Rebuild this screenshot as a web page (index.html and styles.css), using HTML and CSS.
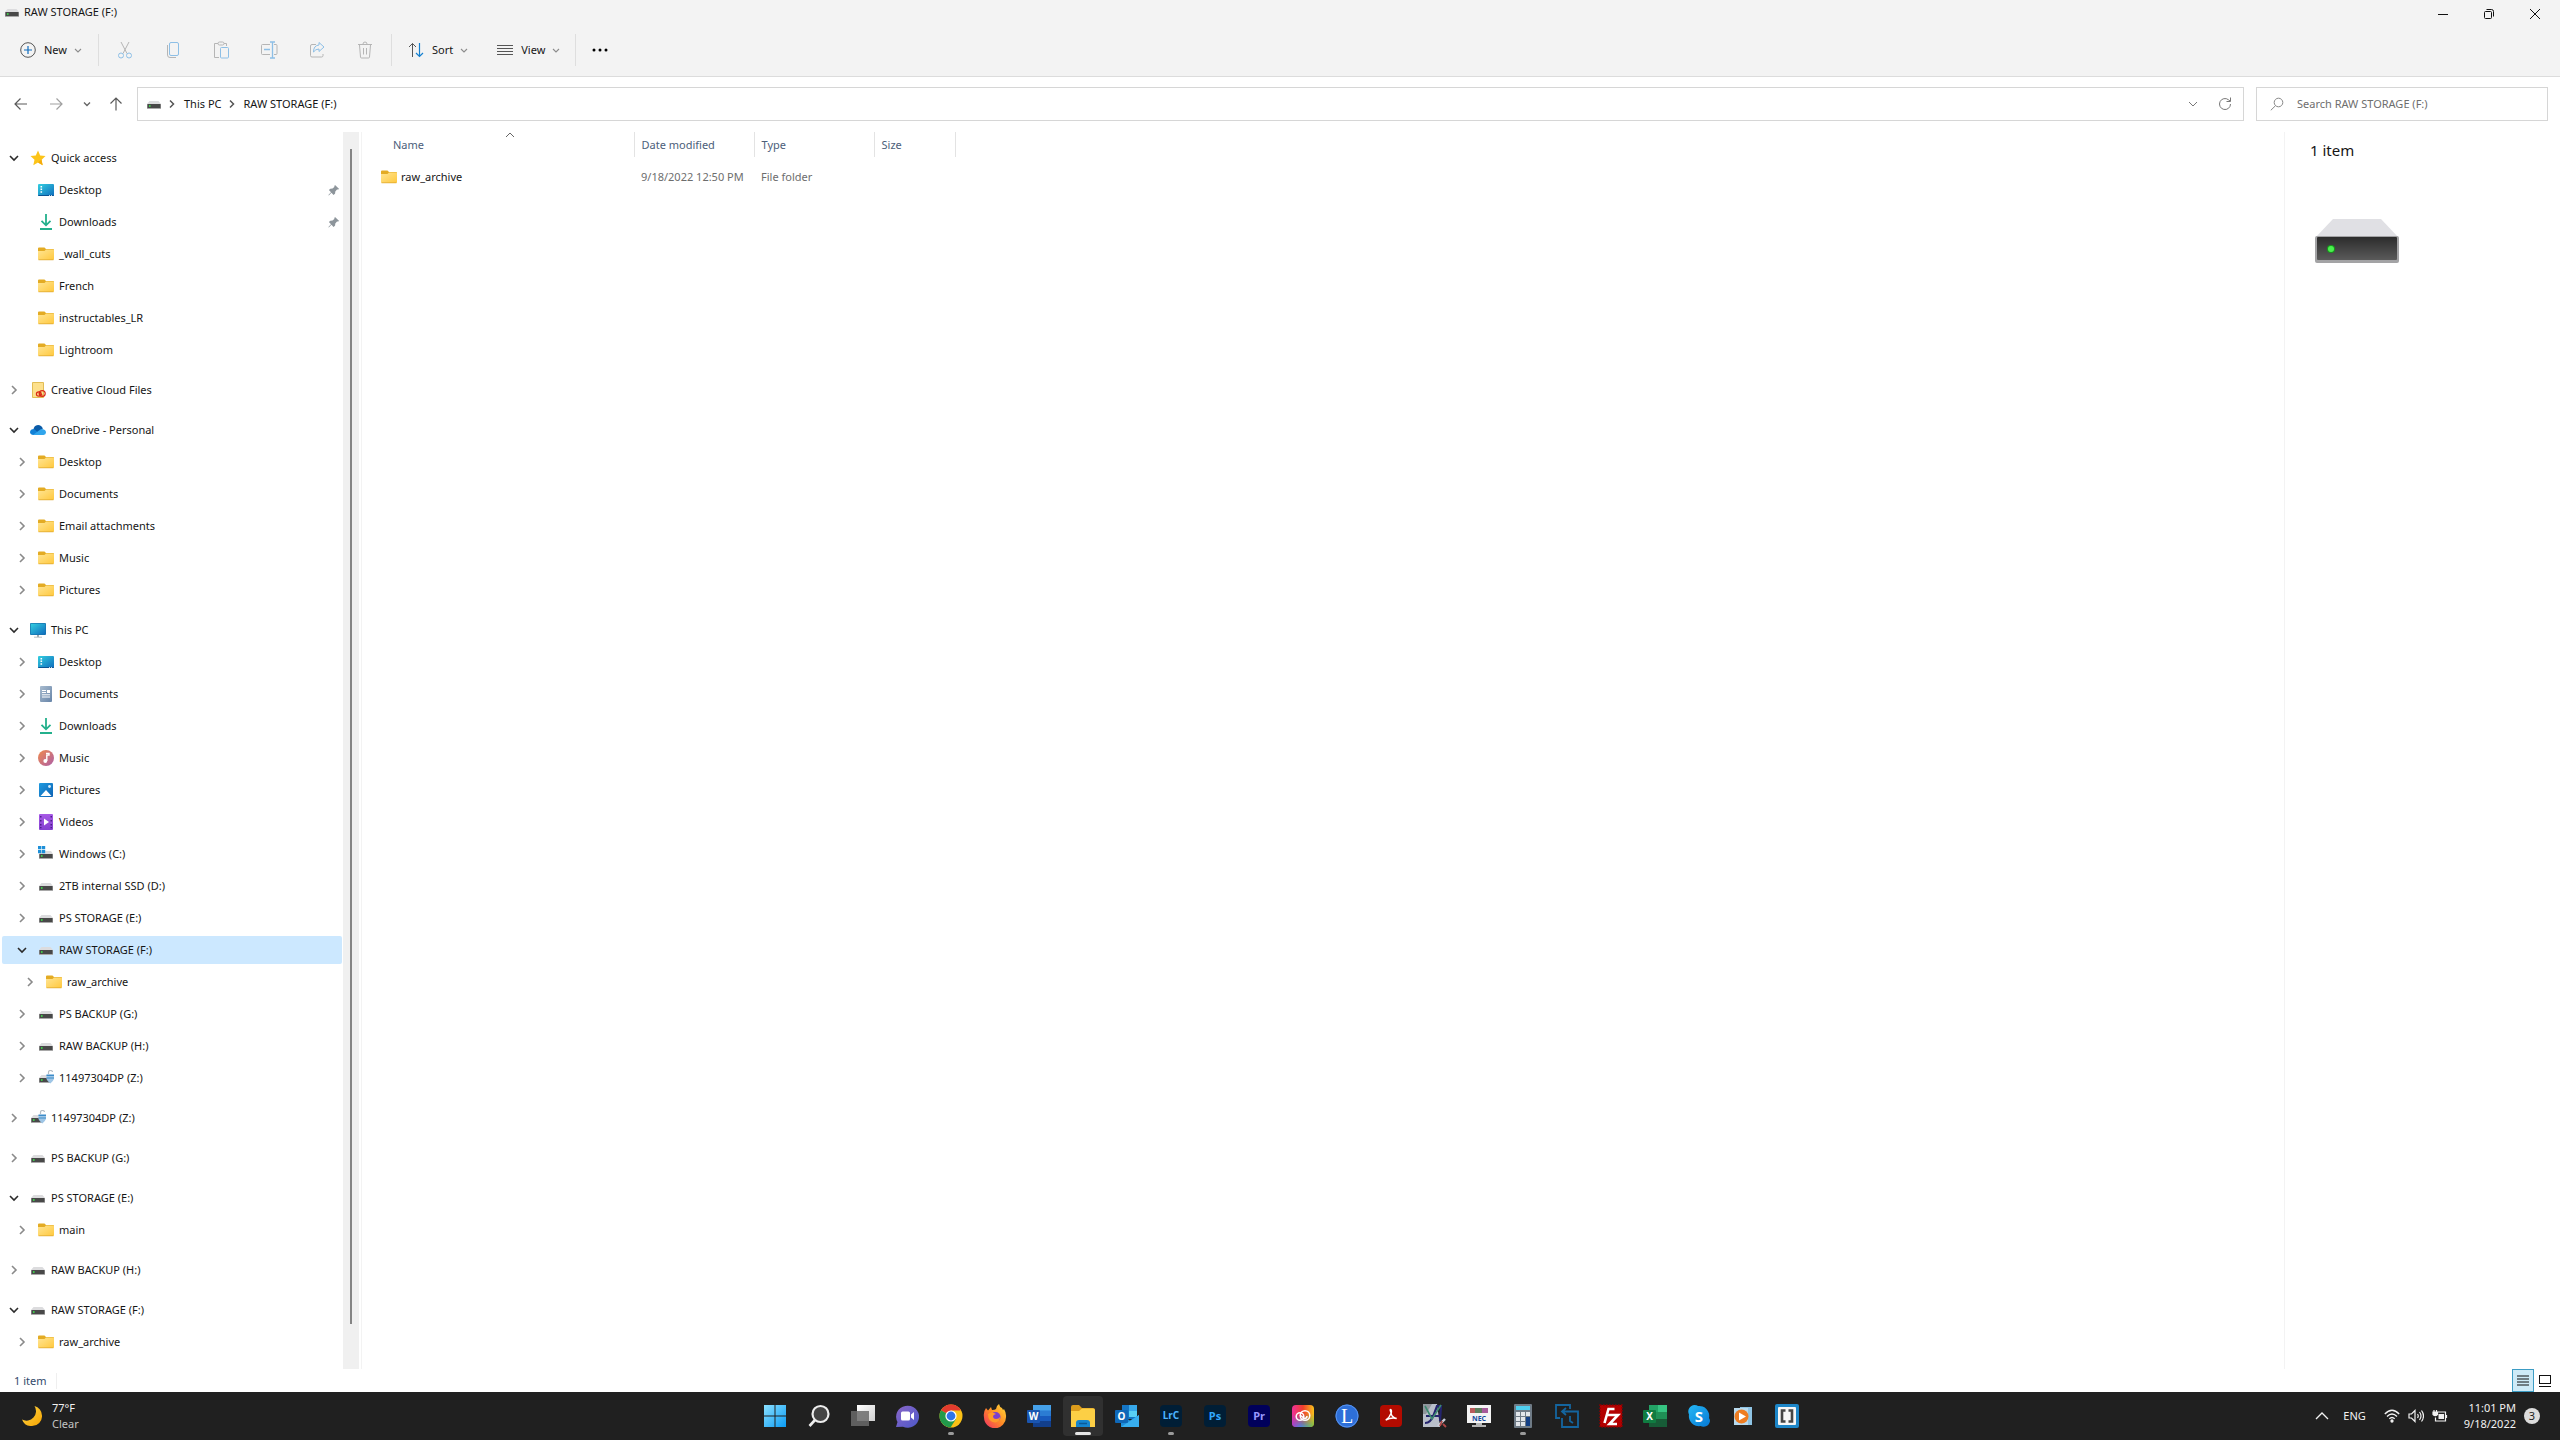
FILE: index.html
```html
<!DOCTYPE html>
<html lang="en">
<head>
<meta charset="utf-8">
<title>RAW STORAGE (F:)</title>
<link rel="stylesheet" href="styles.css">
</head>
<body>
<svg class="sprite" aria-hidden="true">
  <defs>
    <linearGradient id="gFolder" x1="0" y1="0" x2="1" y2="1"><stop offset="0" stop-color="#ffe594"/><stop offset="1" stop-color="#ffc83d"/></linearGradient>
    <linearGradient id="gScreen" x1="0" y1="0" x2="1" y2="1"><stop offset="0" stop-color="#33cfe0"/><stop offset="1" stop-color="#0f6cbd"/></linearGradient>
    <linearGradient id="gDoc" x1="0" y1="0" x2="1" y2="1"><stop offset="0" stop-color="#a9bccf"/><stop offset="1" stop-color="#6684a8"/></linearGradient>
    <linearGradient id="gMusic" x1="0" y1="0" x2="1" y2="1"><stop offset="0" stop-color="#f08a4b"/><stop offset="1" stop-color="#ad5fa8"/></linearGradient>
    <linearGradient id="gPic" x1="0" y1="0" x2="1" y2="1"><stop offset="0" stop-color="#1f9be0"/><stop offset="1" stop-color="#0d62b4"/></linearGradient>
    <linearGradient id="gVid" x1="0" y1="0" x2="0" y2="1"><stop offset="0" stop-color="#a75ae6"/><stop offset="1" stop-color="#8440d0"/></linearGradient>
    <linearGradient id="gDrive" x1="0" y1="0" x2="0" y2="1"><stop offset="0" stop-color="#2c2c2c"/><stop offset="1" stop-color="#5a5a5a"/></linearGradient>
    <linearGradient id="gWin" x1="0" y1="0" x2="1" y2="1"><stop offset="0" stop-color="#8be0ff"/><stop offset="1" stop-color="#0a9cf5"/></linearGradient>
    <linearGradient id="gChat" x1="0" y1="0" x2="1" y2="1"><stop offset="0" stop-color="#8a66c8"/><stop offset="1" stop-color="#4c58c8"/></linearGradient>
    <linearGradient id="gFox" x1="1" y1="0" x2="0" y2="1"><stop offset="0" stop-color="#ffe03a"/><stop offset=".5" stop-color="#ff8a25"/><stop offset="1" stop-color="#f02a6a"/></linearGradient>
    <linearGradient id="gCC" x1="0" y1="0" x2="1" y2="0"><stop offset="0" stop-color="#f0309a"/><stop offset=".5" stop-color="#f0402c"/><stop offset="1" stop-color="#f9c21c"/></linearGradient>
    <linearGradient id="gCCLow" x1="0" y1="0" x2="1" y2="0"><stop offset="0" stop-color="#a040d8"/><stop offset=".4" stop-color="#3f8be8"/><stop offset="1" stop-color="#6cc644"/></linearGradient>
    <linearGradient id="gFade" x1="0" y1="0" x2="0" y2="1"><stop offset=".4" stop-color="#000"/><stop offset="1" stop-color="#fff"/></linearGradient>
    <mask id="mFade"><rect width="24" height="24" fill="url(#gFade)"/></mask>
    <linearGradient id="gSky" x1="0" y1="0" x2="1" y2="1"><stop offset="0" stop-color="#25b8f5"/><stop offset="1" stop-color="#0678d4"/></linearGradient>
    <linearGradient id="gMoon" x1="0" y1="0" x2="1" y2="1"><stop offset="0" stop-color="#ffd84a"/><stop offset="1" stop-color="#f5a300"/></linearGradient>
    <linearGradient id="gTask" x1="0" y1="0" x2="1" y2="1"><stop offset="0" stop-color="#fff"/><stop offset="1" stop-color="#cfcfcf"/></linearGradient>
  </defs>
  <symbol id="right" viewBox="0 0 10 10"><path d="M3 1l4 4-4 4" fill="none" stroke="#8a8a8a" stroke-width="1.6"/></symbol>
  <symbol id="down" viewBox="0 0 10 10"><path d="M1 3l4 4 4-4" fill="none" stroke="#2b2b2b" stroke-width="1.6"/></symbol>
  <symbol id="caret" viewBox="0 0 10 10"><path d="M2 4l3 3 3-3" fill="none" stroke="#8c8c8c" stroke-width="1.1"/></symbol>
  <symbol id="folder" viewBox="0 0 16 16"><path d="M0 2.500q0-1 1-1h5.500l1.500 1.500h7q1 0 1 1v3H0z" fill="#e3ab24"/><path d="M0 5h6.500l1.500-1.500h7q1 0 1 1V13q0 1-1 1H1q-1 0-1-1z" fill="url(#gFolder)"/><path d="M.5 13.800h15" stroke="#dba32a" stroke-width=".7"/></symbol>
  <symbol id="star" viewBox="0 0 16 16"><path d="M8 .6l2.200 4.900 5.300.6-4 3.600 1.200 5.500L8 12.600l-4.700 2.600 1.200-5.500-4-3.600 5.300-.6z" fill="#fcc419"/><path d="M8 12.600l4.700 2.600-1.200-5.500L15.500 6" fill="#f5ab0c"/></symbol>
  <symbol id="desktop" viewBox="0 0 16 16"><rect y="2" width="16" height="12" rx="1" fill="url(#gScreen)"/><path d="M0 13h16v0q0 1-1 1H1q-1 0-1-1z" fill="#0b5494"/><path d="M2.500 4h1.600v1.500H2.500zM2.500 6.600h1.600v1.500H2.500zM2.500 9.200h1.600v1.500H2.500zM11 13h1v.8h-1zM13 13h1v.8h-1z" fill="#fff"/></symbol>
  <symbol id="downloads" viewBox="0 0 16 16"><path d="M8 0v11M3.500 6.800L8 11.300l4.500-4.500M2 15h12" fill="none" stroke="#23b08c" stroke-width="1.8"/></symbol>
  <symbol id="document" viewBox="0 0 16 16"><rect x="2" width="12" height="16" rx="1" fill="url(#gDoc)"/><path d="M4 4.500h4M4 6.500h4M4 8.800h8M4 11h8" stroke="#fff" stroke-width="1"/><rect x="9" y="4" width="3" height="3" fill="#fff"/></symbol>
  <symbol id="music" viewBox="0 0 16 16"><circle cx="8" cy="8" r="8" fill="url(#gMusic)"/><path d="M8 3.500h3v1.600H8.800V11" fill="none" stroke="#fff" stroke-width="1.400"/><circle cx="7.300" cy="11" r="1.900" fill="#fff"/></symbol>
  <symbol id="picture" viewBox="0 0 16 16"><rect x="1" y="1" width="14" height="14" rx="1" fill="url(#gPic)"/><path d="M2.500 14L8 8l5.500 6z" fill="#fff"/><circle cx="11.500" cy="4.500" r="1.400" fill="#d6ecfa"/></symbol>
  <symbol id="video" viewBox="0 0 16 16"><rect x="1" width="14" height="16" rx="1" fill="url(#gVid)"/><path d="M2 2h1.500v1.600H2zM2 6h1.500v1.600H2zM2 10h1.500v1.600H2zM2 13h1.500v1.300H2zM12.500 2H14v1.600h-1.500zM12.500 6H14v1.600h-1.500zM12.500 10H14v1.600h-1.500zM12.500 13H14v1.300h-1.500z" fill="#4d1d8a"/><path d="M6 4.500l5 3.500-5 3.500z" fill="#fff"/></symbol>
  <symbol id="drive" viewBox="0 0 16 16"><path d="M3.500 5h9L15 8H1z" fill="#dcdcde"/><rect x="1" y="8" width="14" height="5" rx=".6" fill="#a8a8a8"/><rect x="1.500" y="8" width="13" height="4" fill="#484848"/><circle cx="3.800" cy="10" r=".9" fill="#3fdc4b"/></symbol>
  <symbol id="windrive" viewBox="0 0 16 16"><path d="M4 5h9l2 3H1z" fill="#dcdcde"/><rect x="1" y="8" width="14" height="5" rx=".6" fill="#a8a8a8"/><rect x="1.500" y="8" width="13" height="4" fill="#484848"/><path d="M0 0h3.300v3.300H0zM3.900 0h3.300v3.300H3.900zM0 3.900h3.300v3.300H0zM3.900 3.900h3.300v3.300H3.900z" fill="#1d8fd8"/><circle cx="3.800" cy="10" r=".9" fill="#3fdc4b"/></symbol>
  <symbol id="lockdrive" viewBox="0 0 16 16"><path d="M3.500 5h8l2 3H1z" fill="#dcdcde"/><rect x="1" y="8" width="12" height="5" rx=".6" fill="#a8a8a8"/><rect x="1.500" y="8" width="11" height="4" fill="#484848"/><circle cx="3.800" cy="10" r=".9" fill="#3fdc4b"/><path d="M10.500 4V2.500q0-2 2-2t2 1.500" fill="none" stroke="#b4bcc4" stroke-width="1.200"/><path d="M8.500 4H16v5q-1 2.500-3.700 4.500Q9.500 11.500 8.500 9z" fill="#9fc6e6"/><path d="M8.500 5.500H16M8.500 8H16" stroke="#3d8cc8" stroke-width="1"/></symbol>
  <symbol id="cloudfiles" viewBox="0 0 16 16"><path d="M2.500.5h11v15h-11z" fill="#fde08c" stroke="#e2bd55"/><ellipse cx="8.800" cy="12" rx="2.400" ry="2.200" fill="none" stroke="#da2a16" stroke-width="1.200"/><ellipse cx="12.200" cy="11.600" rx="3" ry="2.900" fill="none" stroke="#da2a16" stroke-width="1.200"/><path d="M9 11l3.500 2.500" stroke="#da2a16" stroke-width="1.100"/></symbol>
  <symbol id="onedrive" viewBox="0 0 16 16"><path d="M3.500 8Q3.500 3.500 8 3q3.500 0 4.800 3.500L9 12z" fill="#0a5ba8"/><path d="M3.500 13Q0 12.500 0 10q.3-3 4-3l7 6z" fill="#1180d6"/><path d="M3 13l8-6q5 0 5 3.500 0 2.200-2.500 2.500z" fill="#30a5ec"/></symbol>
  <symbol id="pc" viewBox="0 0 16 16"><rect y="1" width="16" height="12" rx="1" fill="#1773ae"/><rect x=".7" y="1.700" width="14.600" height="10.600" fill="url(#gScreen)"/><path d="M7 13h2v2H7z" fill="#9aa4ac"/><path d="M4 15.200h8" stroke="#b6bec4" stroke-width="1"/></symbol>
  <symbol id="pin" viewBox="0 0 12 12"><path d="M7 1l4.200 4-1.200.4-1 .2-1.700 2-.2 2L5.600 11 3.400 8.800.8 11.400l-.4-.5L3 8.300.9 6l1.400-1.300 2.200-.2 1.800-1.600.1-1z" fill="#8d959b"/></symbol>
</svg>

<header class="chrome">
  <div class="titlebar">
    <svg class="i16"><use href="#drive"/></svg>
    <h1>RAW STORAGE (F:)</h1>
    <div class="winctl">
      <button aria-label="Minimize"><svg width="12" height="12"><path d="M1 6.500h10" stroke="#111"/></svg></button>
      <button aria-label="Restore"><svg width="12" height="12" fill="none" stroke="#111"><rect x="1.500" y="3.500" width="7" height="7" rx="1"/><path d="M3.500 1.500h5q2 0 2 2v5"/></svg></button>
      <button aria-label="Close"><svg width="12" height="12"><path d="M1 1l10 10M11 1L1 11" stroke="#111"/></svg></button>
    </div>
  </div>
  <div class="toolbar">
    <button class="cmd new"><svg width="16" height="16" fill="none"><circle cx="8" cy="8" r="7.300" stroke="#555"/><path d="M8 4v8M4 8h8" stroke="#0f6cbd" stroke-width="1.200"/></svg><span>New</span><svg class="i10"><use href="#caret"/></svg></button>
    <div class="group">
      <button class="ico" aria-label="Cut"><svg width="16" height="18" fill="none"><path d="M4 1l6 11.500M12 1L6 12.500" stroke="#b5b5b5"/><circle cx="4" cy="14.500" r="2.500" stroke="#8dbfe6"/><circle cx="12" cy="14.500" r="2.500" stroke="#8dbfe6"/></svg></button>
      <button class="ico" aria-label="Copy"><svg width="16" height="18" fill="none"><rect x="4.500" y="1.500" width="9" height="13" rx="1.500" stroke="#8dbfe6"/><path d="M2.500 4v10q0 2.500 2.500 2.500h6" stroke="#b5b5b5"/></svg></button>
      <button class="ico" aria-label="Paste"><svg width="16" height="18" fill="none"><path d="M5 2.500H1.500v14H6M11 2.500h2.500V5" stroke="#b5b5b5"/><rect x="5" y="1" width="6" height="3" rx="1.500" stroke="#b5b5b5"/><rect x="7.500" y="6.500" width="8" height="10.500" rx="1" stroke="#8dbfe6"/></svg></button>
      <button class="ico" aria-label="Rename"><svg width="18" height="18" fill="none"><path d="M10 3.500H2.500q-1 0-1 1v8q0 1 1 1H10M14 3.500h2q1 0 1 1v8q0 1-1 1h-2" stroke="#b5b5b5"/><path d="M12.500 1v16M10 1h5M10 17h5M4 8.500h6" stroke="#8dbfe6" stroke-width="1.300"/></svg></button>
      <button class="ico" aria-label="Share"><svg width="16" height="18" fill="none"><path d="M7 3.500H3q-1.500 0-1.500 1.500v9.500Q1.500 16 3 16h9.500q1.500 0 1.500-1.500V13" stroke="#b5b5b5"/><path d="M10 1.500l5 4.500-5 4.500V8q-3.500 0-5.500 3 0-6.500 5.500-7z" stroke="#8dbfe6"/></svg></button>
      <button class="ico" aria-label="Delete"><svg width="16" height="18" fill="none" stroke="#b5b5b5"><path d="M1 3.500h14M6 3Q6 1 8 1t2 2M2.500 4l1 12q.1 1 1 1h7q.9 0 1-1l1-12M6.500 7v6.500M9.500 7v6.500"/></svg></button>
    </div>
    <div class="group views">
      <button class="cmd"><svg width="16" height="16" fill="none"><path d="M4.500 15V1.500M1 5l3.500-3.500L8 5" stroke="#555"/><path d="M11.500 1v13.500M8 11l3.500 3.500L15 11" stroke="#1580d0" stroke-width="1.200"/></svg><span>Sort</span><svg class="i10"><use href="#caret"/></svg></button>
      <button class="cmd"><svg width="16" height="16"><path d="M0 3.500h16M0 6.500h16M0 9.500h16M0 12.500h16" stroke="#555"/></svg><span>View</span><svg class="i10"><use href="#caret"/></svg></button>
    </div>
    <button class="ico more" aria-label="See more"><svg width="18" height="4"><circle cx="3" cy="2" r="1.500"/><circle cx="9" cy="2" r="1.500"/><circle cx="15" cy="2" r="1.500"/></svg></button>
  </div>
</header>

<nav class="navbar" aria-label="Address">
  <button aria-label="Back"><svg width="14" height="14" fill="none" stroke="#5a5a5a" stroke-width="1.200"><path d="M13 7H1.500M6.500 1.500L1 7l5.500 5.500"/></svg></button>
  <button aria-label="Forward"><svg width="14" height="14" fill="none" stroke="#a0a0a0" stroke-width="1.200"><path d="M1 7h11.500M7.500 1.500L13 7l-5.500 5.500"/></svg></button>
  <button class="recent" aria-label="Recent locations"><svg width="10" height="10" fill="none" stroke="#666" stroke-width="1.400"><path d="M2 3.500l3 3 3-3"/></svg></button>
  <button class="up" aria-label="Up"><svg width="14" height="14" fill="none" stroke="#5a5a5a" stroke-width="1.200"><path d="M7 13.500V1.500M1.500 6.500L7 1l5.500 5.500"/></svg></button>
  <div class="address">
    <svg class="i16"><use href="#drive"/></svg>
    <svg class="i10 sep"><path d="M3 1.500l3.500 3.500L3 8.500" fill="none" stroke="#555" stroke-width="1.500"/></svg>
    <a href="#pc">This PC</a>
    <svg class="i10 sep"><path d="M3 1.500l3.500 3.500L3 8.500" fill="none" stroke="#555" stroke-width="1.500"/></svg>
    <a href="#raw">RAW STORAGE (F:)</a>
    <button class="drop" aria-label="Previous locations"><svg width="10" height="10" fill="none" stroke="#777"><path d="M1 3l4 4 4-4"/></svg></button>
    <button aria-label="Refresh"><svg width="14" height="14" fill="none" stroke="#777"><path d="M12.500 7A5.500 5.500 0 1 1 10.500 2.800L12 4M12.500 0.500V4.500H8.500"/></svg></button>
  </div>
  <label class="search">
    <svg width="14" height="14" fill="none" stroke="#888"><circle cx="8.500" cy="5.500" r="4.300"/><path d="M5.500 8.700L.8 13.300"/></svg>
    <input type="text" placeholder="Search RAW STORAGE (F:)" aria-label="Search RAW STORAGE (F:)">
  </label>
</nav>

<div class="content">
  <aside class="sidebar">
    <nav class="tree" aria-label="Folders">
      <ul>
        <li><a href="#"><svg class="i10"><use href="#down"/></svg><svg class="i16"><use href="#star"/></svg>Quick access</a></li>
        <li class="l1"><a href="#"><i></i><svg class="i16"><use href="#desktop"/></svg>Desktop<svg class="pin"><use href="#pin"/></svg></a></li>
        <li class="l1"><a href="#"><i></i><svg class="i16"><use href="#downloads"/></svg>Downloads<svg class="pin"><use href="#pin"/></svg></a></li>
        <li class="l1"><a href="#"><i></i><svg class="i16"><use href="#folder"/></svg>_wall_cuts</a></li>
        <li class="l1"><a href="#"><i></i><svg class="i16"><use href="#folder"/></svg>French</a></li>
        <li class="l1"><a href="#"><i></i><svg class="i16"><use href="#folder"/></svg>instructables_LR</a></li>
        <li class="l1"><a href="#"><i></i><svg class="i16"><use href="#folder"/></svg>Lightroom</a></li>
      </ul>
      <ul>
        <li><a href="#"><svg class="i10"><use href="#right"/></svg><svg class="i16"><use href="#cloudfiles"/></svg>Creative Cloud Files</a></li>
      </ul>
      <ul>
        <li><a href="#"><svg class="i10"><use href="#down"/></svg><svg class="i16"><use href="#onedrive"/></svg>OneDrive - Personal</a></li>
        <li class="l1"><a href="#"><svg class="i10"><use href="#right"/></svg><svg class="i16"><use href="#folder"/></svg>Desktop</a></li>
        <li class="l1"><a href="#"><svg class="i10"><use href="#right"/></svg><svg class="i16"><use href="#folder"/></svg>Documents</a></li>
        <li class="l1"><a href="#"><svg class="i10"><use href="#right"/></svg><svg class="i16"><use href="#folder"/></svg>Email attachments</a></li>
        <li class="l1"><a href="#"><svg class="i10"><use href="#right"/></svg><svg class="i16"><use href="#folder"/></svg>Music</a></li>
        <li class="l1"><a href="#"><svg class="i10"><use href="#right"/></svg><svg class="i16"><use href="#folder"/></svg>Pictures</a></li>
      </ul>
      <ul>
        <li><a href="#"><svg class="i10"><use href="#down"/></svg><svg class="i16"><use href="#pc"/></svg>This PC</a></li>
        <li class="l1"><a href="#"><svg class="i10"><use href="#right"/></svg><svg class="i16"><use href="#desktop"/></svg>Desktop</a></li>
        <li class="l1"><a href="#"><svg class="i10"><use href="#right"/></svg><svg class="i16"><use href="#document"/></svg>Documents</a></li>
        <li class="l1"><a href="#"><svg class="i10"><use href="#right"/></svg><svg class="i16"><use href="#downloads"/></svg>Downloads</a></li>
        <li class="l1"><a href="#"><svg class="i10"><use href="#right"/></svg><svg class="i16"><use href="#music"/></svg>Music</a></li>
        <li class="l1"><a href="#"><svg class="i10"><use href="#right"/></svg><svg class="i16"><use href="#picture"/></svg>Pictures</a></li>
        <li class="l1"><a href="#"><svg class="i10"><use href="#right"/></svg><svg class="i16"><use href="#video"/></svg>Videos</a></li>
        <li class="l1"><a href="#"><svg class="i10"><use href="#right"/></svg><svg class="i16"><use href="#windrive"/></svg>Windows (C:)</a></li>
        <li class="l1"><a href="#"><svg class="i10"><use href="#right"/></svg><svg class="i16"><use href="#drive"/></svg>2TB internal SSD (D:)</a></li>
        <li class="l1"><a href="#"><svg class="i10"><use href="#right"/></svg><svg class="i16"><use href="#drive"/></svg>PS STORAGE (E:)</a></li>
        <li class="l1"><a href="#" class="selected" aria-current="page"><svg class="i10"><use href="#down"/></svg><svg class="i16"><use href="#drive"/></svg>RAW STORAGE (F:)</a></li>
        <li class="l2"><a href="#"><svg class="i10"><use href="#right"/></svg><svg class="i16"><use href="#folder"/></svg>raw_archive</a></li>
        <li class="l1"><a href="#"><svg class="i10"><use href="#right"/></svg><svg class="i16"><use href="#drive"/></svg>PS BACKUP (G:)</a></li>
        <li class="l1"><a href="#"><svg class="i10"><use href="#right"/></svg><svg class="i16"><use href="#drive"/></svg>RAW BACKUP (H:)</a></li>
        <li class="l1"><a href="#"><svg class="i10"><use href="#right"/></svg><svg class="i16"><use href="#lockdrive"/></svg>11497304DP (Z:)</a></li>
      </ul>
      <ul>
        <li><a href="#"><svg class="i10"><use href="#right"/></svg><svg class="i16"><use href="#lockdrive"/></svg>11497304DP (Z:)</a></li>
      </ul>
      <ul>
        <li><a href="#"><svg class="i10"><use href="#right"/></svg><svg class="i16"><use href="#drive"/></svg>PS BACKUP (G:)</a></li>
      </ul>
      <ul>
        <li><a href="#"><svg class="i10"><use href="#down"/></svg><svg class="i16"><use href="#drive"/></svg>PS STORAGE (E:)</a></li>
        <li class="l1"><a href="#"><svg class="i10"><use href="#right"/></svg><svg class="i16"><use href="#folder"/></svg>main</a></li>
      </ul>
      <ul>
        <li><a href="#"><svg class="i10"><use href="#right"/></svg><svg class="i16"><use href="#drive"/></svg>RAW BACKUP (H:)</a></li>
      </ul>
      <ul>
        <li><a href="#"><svg class="i10"><use href="#down"/></svg><svg class="i16"><use href="#drive"/></svg>RAW STORAGE (F:)</a></li>
        <li class="l1"><a href="#"><svg class="i10"><use href="#right"/></svg><svg class="i16"><use href="#folder"/></svg>raw_archive</a></li>
      </ul>
    </nav>
    <div class="scrollbar"><div class="thumb"></div></div>
  </aside>

  <main class="files">
    <table>
      <thead>
        <tr>
          <th class="c-name"><button>Name<svg class="sorted" width="10" height="6"><path d="M1 5l4-4 4 4" fill="none" stroke="#666"/></svg></button></th>
          <th class="c-date"><button>Date modified</button></th>
          <th class="c-type"><button>Type</button></th>
          <th class="c-size"><button>Size</button></th>
        </tr>
      </thead>
      <tbody>
        <tr>
          <td class="name"><a href="#"><svg class="i16"><use href="#folder"/></svg>raw_archive</a></td>
          <td>9/18/2022 12:50 PM</td>
          <td>File folder</td>
          <td></td>
        </tr>
      </tbody>
    </table>
  </main>

  <aside class="details">
    <h2>1 item</h2>
    <svg width="84" height="44"><path d="M18 0h48l17 18H1z" fill="#e0e0e4"/><rect y="17" width="84" height="27" rx="2" fill="#a3a3a5"/><rect x="2" y="18" width="80" height="23" rx="1" fill="url(#gDrive)"/><circle cx="16" cy="30" r="4" fill="#169a1c"/><circle cx="16" cy="30" r="3" fill="#4bf04f"/></svg>
  </aside>
</div>

<footer class="status">
  <span>1 item</span>
  <div class="layout">
    <button class="on" aria-label="Details view"><svg width="12" height="11"><path d="M0 1h12M0 4h12M0 7h12M0 10h12" stroke="#111"/></svg></button>
    <button aria-label="Large icons view"><svg width="12" height="12" fill="none" stroke="#111"><rect x=".5" y=".5" width="11" height="8"/><path d="M0 11.500h12"/></svg></button>
  </div>
</footer>

<div class="taskbar">
  <button class="weather">
    <svg width="20" height="20"><path d="M12.500 0A10 10 0 0 1 20 9.500 10 10 0 0 1 10 20 10 10 0 0 1 0 13.500 9.500 9.500 0 0 0 12.500 0z" fill="url(#gMoon)"/></svg>
    <span>77°F<br><small>Clear</small></span>
  </button>
  <div class="apps">
    <button aria-label="Start"><svg viewBox="0 0 24 24"><path d="M1 1h10.500v10.500H1zM12.500 1H23v10.500H12.500zM1 12.500h10.500V23H1zM12.500 12.500H23V23H12.500z" fill="url(#gWin)"/></svg></button>
    <button aria-label="Search"><svg viewBox="0 0 24 24"><circle cx="13.500" cy="10" r="8" fill="#444" stroke="#ededed" stroke-width="2.200"/><path d="M8 16l-5.500 6" stroke="#ededed" stroke-width="2.600"/></svg></button>
    <button aria-label="Task view"><svg viewBox="0 0 24 24"><rect x="6" y="1" width="18" height="16" fill="url(#gTask)"/><rect x="0" y="7" width="18" height="15" fill="#6b6b6b" opacity=".85"/></svg></button>
    <button aria-label="Chat"><svg viewBox="0 0 24 24"><path d="M1 23l1.500-5A11.500 11 0 1 1 8 22.800z" fill="url(#gChat)"/><rect x="6" y="7.500" width="9" height="9" rx="1.500" fill="#fff"/><path d="M16 10.500l3-2.500v8l-3-2.500z" fill="#fff"/></svg></button>
    <button aria-label="Chrome" class="run"><svg viewBox="0 0 24 24"><circle cx="12" cy="12" r="11.500" fill="#fbc116"/><path d="M12 12L2 6.300A11.500 11.500 0 0 1 22 6.300z" fill="#e33b2e"/><path d="M12 12L2 6.200A11.500 11.500 0 0 0 11.500 23.500L17 15z" fill="#229a4b"/><path d="M22 6.500H12v5l5 3.500z" fill="#fbc116"/><circle cx="12" cy="12" r="5.600" fill="#fff"/><circle cx="12" cy="12" r="4.400" fill="#2f74e8"/></svg></button>
    <button aria-label="Firefox"><svg viewBox="0 0 24 24"><path d="M3 4l2 2.500L8 3l1 3q3 0 4-1Q13 2 16 0q.5 3 3 4l1 2 1-1q2.500 4 2 8a11 11 0 0 1-22 .5Q0 8 3 4z" fill="url(#gFox)"/><circle cx="12.500" cy="13" r="5" fill="#7a3fd0"/><path d="M5 10q4-3 8 0-3 .5-3 3 .5 2 3 2 3 0 4-2 0 5-5 5.500Q5 18 5 10z" fill="#ff9a2a"/></svg></button>
    <button aria-label="Word"><svg viewBox="0 0 24 24"><rect x="6" y="1" width="18" height="6" fill="#45a0e8"/><rect x="6" y="6.500" width="18" height="6" fill="#2b7cd3"/><rect x="6" y="12" width="18" height="6" fill="#185abd"/><rect x="6" y="17" width="18" height="6" fill="#123f8c"/><rect y="6" width="13" height="13" rx="1" fill="#1a55b0"/><text x="6.500" y="16" font-size="10">W</text></svg></button>
    <button aria-label="File Explorer" class="active"><svg viewBox="0 0 24 24"><path d="M0 3q0-2 2-2h6l3 3h11q2 0 2 2v4H0z" fill="#dc9c1c"/><path d="M0 7h8l3-2.500h11q2 0 2 2V23H0z" fill="#fccf45"/><path d="M5 23v-4q0-3 3-3h8q3 0 3 3v4z" fill="#1585cf"/><path d="M8 19.500h8" stroke="#0b5a98" stroke-width="1.500"/></svg></button>
    <button aria-label="Outlook"><svg viewBox="0 0 24 24"><rect x="7" y="1" width="15" height="14" fill="#1575c4"/><rect x="14" y="1" width="8" height="6" fill="#37a8ea"/><rect x="14" y="7" width="8" height="6" fill="#58d0f5"/><path d="M6 11l9 5.500 9-5.500v12H6z" fill="#1c8fdd"/><path d="M6 23l18-12v12z" fill="#38aff0"/><rect y="6" width="13" height="13" rx="1" fill="#0f68b8"/><text x="6.500" y="16" font-size="10">O</text></svg></button>
    <button aria-label="Lightroom Classic" class="run"><svg viewBox="0 0 24 24"><rect x="1" y="1" width="22" height="22" rx="4" fill="#001e36"/><text x="12" y="15" font-size="10" fill="#4bb4ff">LrC</text></svg></button>
    <button aria-label="Photoshop"><svg viewBox="0 0 24 24"><rect x="1" y="1" width="22" height="22" rx="4" fill="#001e36"/><text x="12" y="16" font-size="11" fill="#31a8ff">Ps</text></svg></button>
    <button aria-label="Premiere Pro"><svg viewBox="0 0 24 24"><rect x="1" y="1" width="22" height="22" rx="4" fill="#00005b"/><text x="12" y="16" font-size="11" fill="#9999ff">Pr</text></svg></button>
    <button aria-label="Creative Cloud"><svg viewBox="0 0 24 24"><rect x="1" y="1" width="22" height="22" rx="4" fill="url(#gCC)"/><rect x="1" y="1" width="22" height="22" rx="4" fill="url(#gCCLow)" mask="url(#mFade)"/><g fill="none" stroke="#fff" stroke-width="1.500"><circle cx="14" cy="11.500" r="4.800"/><circle cx="9" cy="12.500" r="3.800"/><path d="M9 11l4.500 3.500q2.500 0 2.500-2.500"/></g></svg></button>
    <button aria-label="L"><svg viewBox="0 0 24 24"><circle cx="12" cy="12" r="11.500" fill="#2d6fd8"/><circle cx="12" cy="12" r="11" fill="none" stroke="#5a94ee"/><text x="12" y="19" font-size="20" class="serif">L</text></svg></button>
    <button aria-label="Acrobat"><svg viewBox="0 0 24 24"><rect x="1" y="1" width="22" height="22" rx="4" fill="#b30b00"/><path d="M11.500 5.500q1.500 0 .7 4.500 1 3.500 5.500 4.500-5-1.500-11 1.500 4-2.500 5.500-7-1.500-3.500-.7-3.500z" fill="none" stroke="#fff" stroke-width="1.400"/></svg></button>
    <button aria-label="Font editor"><svg viewBox="0 0 24 24"><path d="M0 0h14l3 23H0z" fill="#b9bfca"/><path d="M0 0h9l-6 10H0z" fill="#8f959c"/><path d="M2 19q6 0 9-9l3-8h4l-1 15M3 12h14" fill="none" stroke="#24246e" stroke-width="2.200"/><path d="M2 2l7 13L18 1" fill="none" stroke="#3c8a70" stroke-width="1.600"/><path d="M15 22l7-7" stroke="#c9ced8" stroke-width="2.400"/><path d="M17 22l2-5M20 20l3 3" stroke="#b04848" stroke-width="1.800"/></svg></button>
    <button aria-label="NEC display"><svg viewBox="0 0 24 24"><rect y="1" width="24" height="18" fill="#f4f4f4"/><rect x="3" y="4" width="18" height="5" fill="#5d7f5c"/><path d="M3 4h5v5H3z" fill="#b85a5a"/><path d="M15 4h6v5h-6z" fill="#a65a9a"/><text x="12" y="17" font-size="7" fill="#154a9c">NEC</text><path d="M9 19h6v2h4v2H5v-2h4z" fill="#b5b5b5"/></svg></button>
    <button aria-label="Calculator" class="run"><svg viewBox="0 0 24 24"><rect x="3" width="18" height="24" rx="1" fill="#6f7b86"/><rect x="5" y="2" width="14" height="4" fill="#4fd0f0"/><path d="M5 8h4v4H5zM10 8h4v4h-4zM15 8h4v4h-4zM5 13h4v4H5zM10 13h4v4h-4zM5 18h4v4H5zM10 18h4v4h-4z" fill="#e2e6ea"/><path d="M15 13h4v9h-4z" fill="#123f85"/></svg></button>
    <button aria-label="Backup"><svg viewBox="0 0 24 24" fill="none" stroke="#14659f" stroke-width="1.800"><path d="M5 14H1V1h14v4"/><path d="M12 7.500H23V23H7v-9M14 7.500H8M11 4L7 7.500l4 3.500"/><path d="M15 12v5l3 2"/></svg></button>
    <button aria-label="FileZilla"><svg viewBox="0 0 24 24"><rect x="1" y="1" width="22" height="22" fill="#b30000"/><rect x="1" y="1" width="22" height="22" fill="none" stroke="#8a0000" stroke-width="1.500" stroke-dasharray="1.500 1.500"/><path d="M15.500 5H9.500L5.500 19M7 11h6M12 11h7l-8.500 9H18" fill="none" stroke="#fff" stroke-width="2.600"/></svg></button>
    <button aria-label="Excel"><svg viewBox="0 0 24 24"><rect x="6" y="1" width="18" height="22" rx="1" fill="#1f8f55"/><rect x="15" y="1" width="9" height="7" fill="#36c481"/><rect x="6" y="1" width="9" height="7" fill="#23a366"/><rect x="6" y="15" width="18" height="8" fill="#175c37"/><rect y="6" width="13" height="13" rx="1" fill="#107c41"/><text x="6.500" y="16" font-size="10">X</text></svg></button>
    <button aria-label="Skype"><svg viewBox="0 0 24 24"><path d="M7.500 1Q10 1 11 2a10 10 0 0 1 11 12q1 1.500 1 3a6.500 6.500 0 0 1-9.500 5A10 10 0 0 1 2 10.500 6.500 6.500 0 0 1 7.500 1z" fill="url(#gSky)"/><text x="12" y="17.500" font-size="15">S</text></svg></button>
    <button aria-label="Media Player"><svg viewBox="0 0 24 24"><path d="M9 3h12v18H9z" fill="#8fc4e4"/><path d="M3 4h14v17H3z" fill="#b9dbef"/><circle cx="10.500" cy="12.500" r="7" fill="#ee7d22"/><path d="M8 8.500l7 4-7 4z" fill="#fff"/></svg></button>
    <button aria-label="Brackets"><svg viewBox="0 0 24 24"><rect width="24" height="24" rx="2" fill="#1d86c8"/><rect x="3" y="3" width="18" height="18" rx="1" fill="#f6f6f6"/><path d="M10.500 6.500H7v11h3.500M13.500 6.500H17v11h-3.500" fill="none" stroke="#454545" stroke-width="2.600"/></svg></button>
  </div>
  <div class="tray">
    <button aria-label="Show hidden icons"><svg width="14" height="8"><path d="M1 7l6-6 6 6" fill="none" stroke="#f2f2f2" stroke-width="1.300"/></svg></button>
    <button class="lang">ENG</button>
    <button class="quick" aria-label="Network, volume, battery">
      <svg width="16" height="14" fill="none" stroke="#f2f2f2" stroke-width="1.300"><path d="M.8 5Q8-2.500 15.200 5M3 7.500q5-5 10 0M5.300 9.800q2.700-2.600 5.400 0"/><circle cx="8" cy="12" r="1" fill="#f2f2f2"/></svg>
      <svg width="16" height="14" fill="none" stroke="#f2f2f2" stroke-width="1.200"><path d="M1 5v4h2.500L7 12.500v-11L3.500 5zM9.500 5q1.500 2 0 4M11.500 3q3 4 0 8M13.500 1.500q4 5.500 0 11"/></svg>
      <svg width="16" height="14" fill="none" stroke="#f2f2f2" stroke-width="1.200"><path d="M6 3h7.500v9h-10V8.500M2 1v2M4.500 1v2M14.500 6v3"/><path d="M1 3h4.500v2.500q-2.200 2-4.500 0z" fill="#f2f2f2"/><rect x="6.500" y="5" width="5.500" height="5" fill="#f2f2f2" stroke="none"/></svg>
    </button>
    <button class="clock"><time>11:01 PM<br>9/18/2022</time></button>
    <button class="badge" aria-label="3 notifications">3</button>
  </div>
</div>
</body>
</html>
```
FILE: styles.css
```css
* { box-sizing: border-box; }

body {
  margin: 0;
  min-height: 100vh;
  display: flex;
  flex-direction: column;
  background: #fff;
  color: #161616;
  font: 11px/16px "Noto Sans", "Open Sans", sans-serif;
}

button, input {
  font: inherit;
  color: inherit;
  border: 0;
  padding: 0;
  margin: 0;
  background: none;
}

button {
  display: flex;
  align-items: center;
  justify-content: center;
}

a { color: inherit; text-decoration: none; }
h1, h2 { margin: 0; font: inherit; }
ul { list-style: none; margin: 0; padding: 0; }
svg { flex: none; display: block; }

.sprite { position: absolute; width: 0; height: 0; }
.i16 { width: 16px; height: 16px; }
.i10 { width: 10px; height: 10px; }

/* Title bar and commands */
.chrome {
  background: #f3f3f3;
  border-bottom: 1px solid #dcdcdc;
}

.titlebar {
  display: flex;
  align-items: center;
  height: 24px;
  padding-left: 4px;
  gap: 4px;
}

.winctl { margin-left: auto; display: flex; padding: 4px 2px 0 0; }
.winctl button { width: 46px; height: 24px; }

.toolbar {
  display: flex;
  align-items: center;
  height: 52px;
  padding-left: 20px;
}

.cmd span { margin: 0 6px 0 8px; }
.new { margin-right: 15px; }

.group {
  display: flex;
  align-items: center;
  height: 32px;
  border-left: 1px solid #dedede;
}

.group .ico { width: 48px; }
.group:not(.views) { padding: 0 2px; }
.views {
  gap: 28px;
  padding: 0 14px 0 16px;
  border-right: 1px solid #dedede;
}
.more { width: 48px; height: 32px; }

/* Address bar */
.navbar {
  display: flex;
  align-items: center;
  height: 55px;
  padding: 0 12px 2px 3px;
}

.navbar > button { width: 35px; height: 32px; }
.navbar > .recent { width: 28px; }
.navbar > .up { width: 30px; margin-right: 6px; }

.address, .search {
  display: flex;
  align-items: center;
  height: 34px;
  border: 1px solid #d6d6d6;
}

.address { flex: 1; padding: 0 2px 0 8px; }
.address .sep { margin: 0 7px 0 5px; }
.address button { width: 32px; height: 32px; }
.address .drop { margin-left: auto; }

.search {
  width: 292px;
  margin-left: 12px;
  padding-left: 13px;
  gap: 13px;
}
.search input { flex: 1; min-width: 0; outline: 0; }
.search input::placeholder { color: #6e6e6e; opacity: 1; }

/* Folder tree */
.content { flex: 1; display: flex; }

.sidebar {
  display: flex;
  width: 362px;
  padding-right: 2px;
  border-right: 1px solid #f3f3f3;
}

.tree {
  flex: 1;
  display: flex;
  flex-direction: column;
  gap: 12px;
  padding: 12px 1px 12px 2px;
}

.tree ul { display: flex; flex-direction: column; gap: 4px; }

.tree a {
  display: flex;
  align-items: center;
  height: 28px;
  padding-left: 7px;
  border-radius: 2px;
}
.tree .l1 a { padding-left: 15px; }
.tree .l2 a { padding-left: 23px; }
.tree i { width: 10px; }
.tree .i16 { margin: 0 5px 0 11px; }
.tree .selected { background: #cce8ff; }
.tree .pin { width: 12px; height: 12px; margin: 0 2px 0 auto; }

.scrollbar { width: 16px; padding: 17px 7px 45px; background: #f0f0f0; }
.thumb { width: 2px; height: 100%; background: #858585; }

/* File list */
.files { flex: 1; }

table { border-collapse: collapse; table-layout: fixed; width: 593px; }
th {
  height: 25px;
  padding: 0 0 0 7px;
  border-right: 1px solid #e3e3e3;
  font-weight: 400;
  color: #4c607a;
}
th button { position: relative; width: 100%; height: 25px; justify-content: flex-start; }
.c-name { width: 272px; padding-left: 24px; }
.c-name button { padding-left: 7px; }
.c-date, .c-type { width: 120px; }
.c-size { width: 81px; }
.sorted { position: absolute; top: 0; left: calc(50% - 5px); }

td { height: 40px; padding: 0 0 0 7px; color: #6d6d6d; white-space: nowrap; }
td.name { padding-left: 19px; color: #161616; }
td.name a { display: flex; align-items: center; gap: 4px; }

/* Details pane */
.details { width: 276px; padding: 7px 25px; border-left: 1px solid #f3f3f3; }
.details h2 { font-size: 15px; line-height: 22px; }
.details svg { margin: 58px 0 0 5px; }

/* Status bar */
.status {
  display: flex;
  align-items: center;
  height: 23px;
  padding: 0 4px 0 14px;
  color: #33496b;
}
.status span { padding-right: 10px; border-right: 1px solid #efefef; }
.layout { display: flex; margin-left: auto; }
.layout button { width: 22px; height: 23px; }
.layout .on { background: #cdeaf7; border: 1px solid #3c9cc4; }

/* Taskbar */
.taskbar {
  display: grid;
  grid-template-columns: 1fr auto 1fr;
  align-items: center;
  height: 48px;
  background: #202020;
  color: #f2f2f2;
}

.weather { justify-self: start; gap: 10px; padding-left: 22px; text-align: left; }
.weather small { font-size: 11px; color: #c4c4c4; }

.apps { display: flex; gap: 4px; padding-left: 2px; }
.apps button { position: relative; width: 40px; height: 40px; border-radius: 4px; }
.apps svg { width: 24px; height: 24px; }
.apps text { font-weight: 700; text-anchor: middle; }
.apps text:not([fill]) { fill: #fff; }
.apps .serif { font-family: "Liberation Serif", serif; font-weight: 400; }
.apps .active { background: #303030; }
.apps .run::after, .apps .active::after {
  content: "";
  position: absolute;
  left: 17px;
  bottom: 1px;
  width: 6px;
  height: 3px;
  border-radius: 2px;
  background: #9a9a9a;
}
.apps .active::after { left: 12px; width: 16px; background: #e6e6e6; }

.tray { justify-self: end; display: flex; align-items: center; padding-right: 20px; }
.lang { margin: 0 18px 0 14px; }
.quick { gap: 8px; }
.clock { margin: 0 8px 0 16px; text-align: right; }
.badge { width: 16px; height: 16px; border-radius: 8px; background: #dcdcdc; color: #202020; }
```
